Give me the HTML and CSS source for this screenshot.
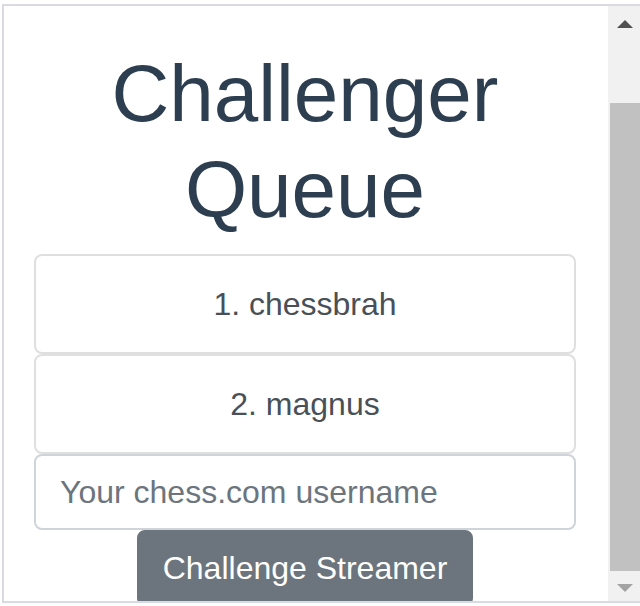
FILE: index.html
```html
<!DOCTYPE html>
<html lang="en">
<head>
<meta charset="utf-8">
<title>Challenger Queue</title>
<link rel="stylesheet" href="styles.css">
</head>
<body>
<div class="frame">
  <div class="viewport">
    <div class="content">
      <h1 class="title">Challenger Queue</h1>
      <ul class="queue">
        <li class="queue-item">1. chessbrah</li>
        <li class="queue-item">2. magnus</li>
      </ul>
      <input class="username" type="text" placeholder="Your chess.com username">
      <button class="challenge" type="button">Challenge Streamer</button>
    </div>
  </div>
  <div class="scrollbar">
    <div class="sb-btn sb-up"><span class="arrow-up"></span></div>
    <div class="sb-track"><div class="sb-thumb"></div></div>
    <div class="sb-btn sb-down"><span class="arrow-down"></span></div>
  </div>
</div>
</body>
</html>
```
FILE: styles.css
```css
html, body {
  margin: 0;
  padding: 0;
  background: #fff;
  overflow: hidden;
}
body {
  font-family: "Liberation Sans", Arial, sans-serif;
}
.frame {
  display: flex;
  margin: 4px 0 0 2px;
  width: 638px;
  height: 595px;
  border: 2px solid #dadae2;
  border-right: none;
  background: #fff;
}
.viewport {
  flex: 1;
  overflow: hidden;
}
.content {
  padding: 40px 32px 0 30px;
}
.title {
  margin: 0 0 16px;
  font-size: 80px;
  line-height: 1.2;
  font-weight: 400;
  color: #2c3e50;
  text-align: center;
}
.queue {
  list-style: none;
  margin: 0;
  padding: 0;
}
.queue-item {
  border: 2px solid #dfdfdf;
  border-radius: 8px;
  padding: 24px 40px;
  font-size: 32px;
  line-height: 48px;
  text-align: center;
  color: #495057;
}
.username {
  display: block;
  box-sizing: border-box;
  width: 100%;
  height: 76px;
  margin: 0;
  padding: 12px 24px;
  font-family: inherit;
  font-size: 32px;
  line-height: 48px;
  color: #495057;
  border: 2px solid #ced4da;
  border-radius: 8px;
  background: #fff;
  outline: none;
}
.username::placeholder {
  color: #6c757d;
  opacity: 1;
}
.challenge {
  display: block;
  margin: 0 auto;
  padding: 12px 24px;
  font-family: inherit;
  font-size: 32px;
  line-height: 48px;
  color: #fff;
  background: #6c757d;
  border: 2px solid #6c757d;
  border-radius: 8px;
}
.scrollbar {
  width: 34px;
  display: flex;
  flex-direction: column;
  background: #f1f1f1;
}
.sb-btn {
  display: flex;
  justify-content: center;
}
.sb-up {
  height: 34px;
  align-items: flex-start;
  padding-top: 14px;
  box-sizing: border-box;
}
.sb-down {
  height: 30px;
  padding-top: 13px;
  box-sizing: border-box;
}
.arrow-up {
  width: 0;
  height: 0;
  border-left: 8px solid transparent;
  border-right: 8px solid transparent;
  border-bottom: 8px solid #505050;
}
.arrow-down {
  width: 0;
  height: 0;
  border-left: 8px solid transparent;
  border-right: 8px solid transparent;
  border-top: 8px solid #a3a3a3;
}
.sb-track {
  flex: 1;
  display: flex;
  flex-direction: column;
  padding: 63px 2px 0;
}
.sb-thumb {
  flex: 1;
  background: #c1c1c1;
}
```
